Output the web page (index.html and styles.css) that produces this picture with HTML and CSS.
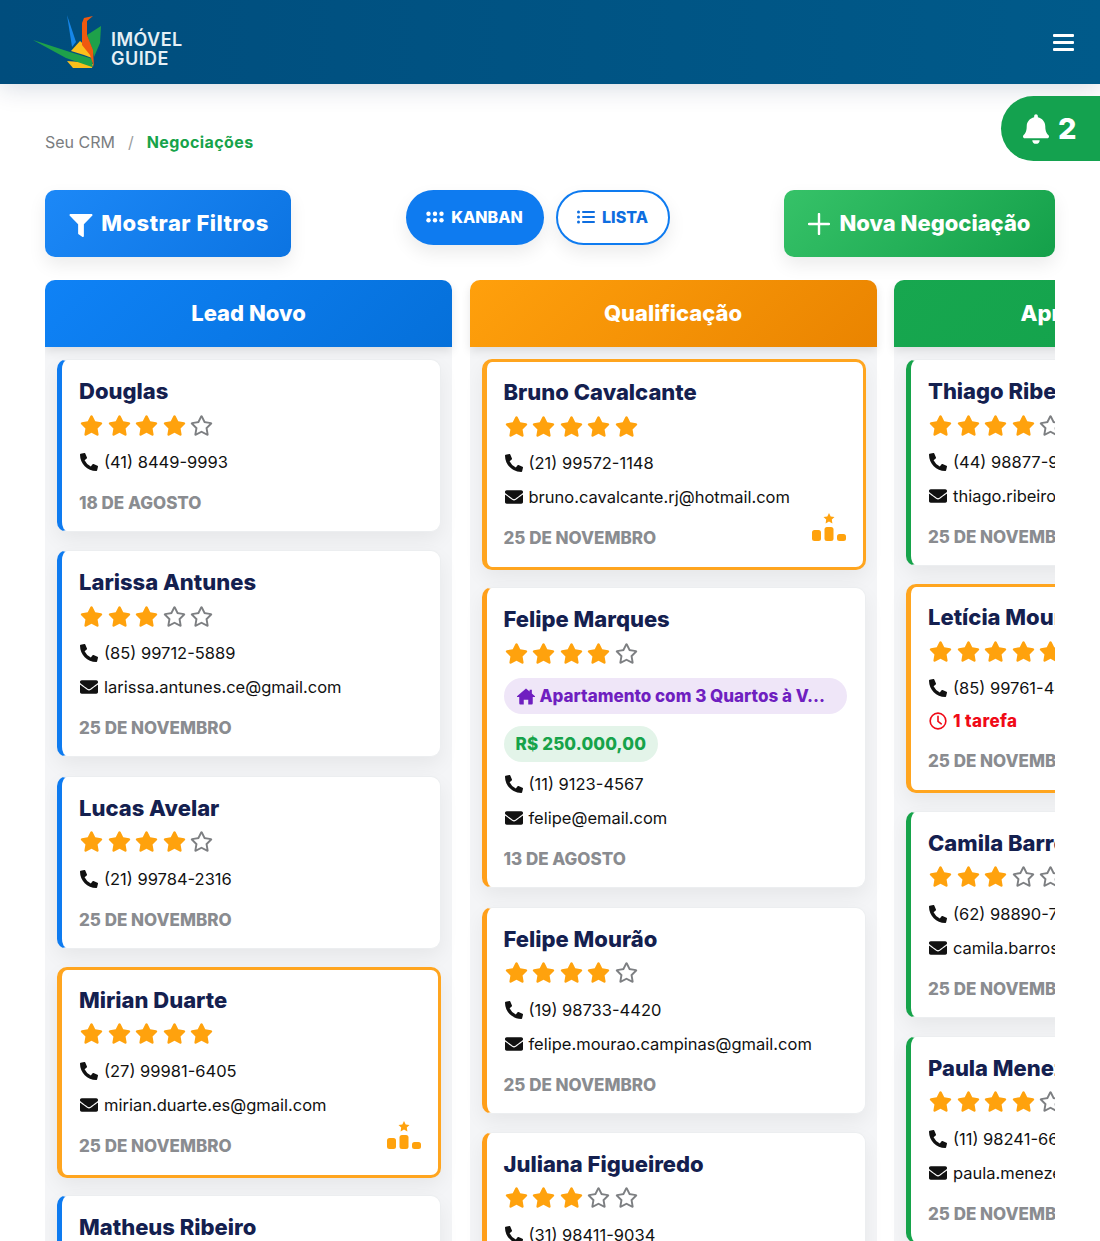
FILE: index.html
```html
<!DOCTYPE html>
<html lang="pt-BR">
<head>
    <meta charset="utf-8">
    <title>Imóvel Guide - Negociações</title>
    <link rel="stylesheet" href="styles.css">
</head>
<body>

<!-- Icons -->
<svg class="icon-defs" aria-hidden="true">
    <symbol id="i-star" viewBox="0 0 576 512"><path d="M259.3 17.8L194 150.2 47.9 171.5c-26.2 3.8-36.7 36.1-17.7 54.6l105.7 103-25 145.5c-4.5 26.3 23.2 46 46.4 33.7L288 439.6l130.7 68.7c23.2 12.2 50.9-7.4 46.4-33.7l-25-145.5 105.7-103c19-18.5 8.5-50.8-17.7-54.6L382 150.2 316.7 17.8c-11.7-23.6-45.6-23.9-57.4 0z"/></symbol>
    <symbol id="i-star-o" viewBox="0 0 576 512"><path d="M528.1 171.5L382 150.2 316.7 17.8c-11.7-23.6-45.6-23.9-57.4 0L194 150.2 47.9 171.5c-26.2 3.8-36.7 36.1-17.7 54.6l105.7 103-25 145.5c-4.5 26.3 23.2 46 46.4 33.7L288 439.6l130.7 68.7c23.2 12.2 50.9-7.4 46.4-33.7l-25-145.5 105.7-103c19-18.5 8.5-50.8-17.7-54.6zM388.6 312.3l23.7 138.4L288 385.4l-124.3 65.3 23.7-138.4-100.6-98 139-20.2 62.2-126 62.2 126 139 20.2-100.6 98z"/></symbol>
    <symbol id="i-phone" viewBox="0 0 512 512"><path d="M497.39 361.8l-112-48a24 24 0 0 0-28 6.9l-49.6 60.6A370.66 370.66 0 0 1 130.6 204.11l60.6-49.6a23.94 23.94 0 0 0 6.9-28l-48-112A24.16 24.16 0 0 0 122.6.61l-104 24A24 24 0 0 0 0 48c0 256.5 207.9 464 464 464a24 24 0 0 0 23.4-18.6l24-104a24.29 24.29 0 0 0-14.01-27.6z"/></symbol>
    <symbol id="i-mail" viewBox="0 0 512 512"><path d="M502.3 190.8c3.9-3.1 9.7-.2 9.7 4.7V400c0 26.5-21.5 48-48 48H48c-26.5 0-48-21.5-48-48V195.6c0-5 5.7-7.8 9.7-4.7 22.4 17.4 52.1 39.5 154.1 113.6 21.1 15.4 56.7 47.8 92.2 47.6 35.7.3 72-32.8 92.3-47.6 102-74.1 131.6-96.3 154-113.7zM256 320c23.2.4 56.6-29.2 73.4-41.4 132.7-96.3 142.8-104.7 173.4-128.7 5.8-4.5 9.2-11.5 9.2-18.9v-19c0-26.5-21.5-48-48-48H48C21.5 64 0 85.5 0 112v19c0 7.4 3.4 14.3 9.2 18.9 30.6 23.9 40.7 32.4 173.4 128.7 16.8 12.2 50.2 41.8 73.4 41.4z"/></symbol>
    <symbol id="i-filter" viewBox="0 0 512 512"><path d="M487.976 0H24.028C2.71 0-8.047 25.866 7.058 40.971L192 225.941V432c0 7.831 3.821 15.17 10.237 19.662l80 55.98C298.02 518.69 320 507.493 320 487.98V225.941l184.947-184.97C520.021 25.896 509.338 0 487.976 0z"/></symbol>
    <symbol id="i-bell" viewBox="0 0 448 512"><path d="M224 512c35.32 0 63.97-28.65 63.97-64H160.03c0 35.35 28.65 64 63.97 64zm215.39-149.71c-19.32-20.76-55.47-51.99-55.47-154.29 0-77.7-54.48-139.9-127.94-155.16V32c0-17.67-14.32-32-31.98-32s-31.98 14.33-31.98 32v20.84C118.56 68.1 64.08 130.3 64.08 208c0 102.3-36.15 133.53-55.47 154.29-6 6.45-8.66 14.16-8.61 21.71.11 16.4 12.98 32 32.1 32h383.8c19.12 0 32-15.6 32.1-32 .05-7.55-2.61-15.27-8.61-21.71z"/></symbol>
    <symbol id="i-home" viewBox="0 0 20 18"><path d="M10 0L0 8.6c-.4.4-.1 1 .4 1H2.5v6.9c0 .8.6 1.5 1.4 1.5H7.500v-5.500h5V18h3.600c.8 0 1.400-.7 1.400-1.500V9.600h2.100c.5 0 .8-.6.400-1L16.500 5.600V1.500h-2.500v2z"/></symbol>
    <symbol id="i-clock" viewBox="0 0 20 20"><circle cx="10" cy="10" r="8.700" fill="none" stroke="currentColor" stroke-width="1.800"/><path d="M10 4.800V10.500l3.600 2.600" fill="none" stroke="currentColor" stroke-width="1.800" stroke-linecap="round"/></symbol>
    <symbol id="i-podium" viewBox="0 0 34 30"><path d="M17 0l1.700 3.400 3.800.5-2.700 2.700.6 3.800L17 8.600l-3.400 1.800.6-3.800-2.700-2.700 3.800-.5z"/><rect x="0" y="17" width="9" height="11" rx="2.500"/><rect x="12.500" y="14" width="9" height="14" rx="2.500"/><rect x="25" y="21" width="9" height="7" rx="2.500"/></symbol>
</svg>

<header class="top-bar">
    <a class="logo" href="#">
        <svg class="logo-mark" viewBox="0 0 88 75" aria-hidden="true">
            <polygon points="47,10 56,37 52,42" fill="#1686e8"/>
            <polygon points="81,21 67,30 72,43 74,52 80,38" fill="#1ea14a"/>
            <polygon points="60,36 51,46 64,50 72,53 69,44" fill="#fbbf1c"/>
            <polygon points="47,56 53,63 72,63 73,59 60,57" fill="#fbbf1c"/>
            <polygon points="13,35 50,47 73,54 72,62 46,53" fill="#1ea14a"/>
            <polygon points="73,11 64,13 62,18 62,40 70,50 74,62 73,45 67,30 67,16" fill="#f0590f"/>
        </svg>
        <span class="logo-text">IMÓVEL<br>GUIDE</span>
    </a>
    <button class="menu-btn" aria-label="Menu"><span></span><span></span><span></span></button>
</header>

<!-- Notifications -->
<div class="notify">
    <svg class="notify-icon"><use href="#i-bell"/></svg>
    <span>2</span>
</div>

<main class="content">
    <nav class="breadcrumb">
        <span>Seu CRM</span>
        <span class="sep">/</span>
        <strong>Negociações</strong>
    </nav>

    <div class="toolbar">
        <button class="btn btn-blue">
            <svg class="btn-icon"><use href="#i-filter"/></svg>
            Mostrar Filtros
        </button>
        <div class="view-switch">
            <button class="pill pill-on">
                <svg class="pill-icon" viewBox="0 0 18 12" aria-hidden="true">
                    <g fill="currentColor">
                        <circle cx="2.500" cy="2.800" r="2.200"/><circle cx="9" cy="2.800" r="2.200"/><circle cx="15.500" cy="2.800" r="2.200"/>
                        <circle cx="2.500" cy="9.200" r="2.200"/><circle cx="9" cy="9.200" r="2.200"/><circle cx="15.500" cy="9.200" r="2.200"/>
                    </g>
                </svg>
                KANBAN
            </button>
            <button class="pill pill-off">
                <svg class="pill-icon" viewBox="0 0 18 14" aria-hidden="true">
                    <g fill="currentColor">
                        <circle cx="1.500" cy="2" r="1.500"/><circle cx="1.500" cy="7" r="1.500"/><circle cx="1.500" cy="12" r="1.500"/>
                        <rect x="5" y="1" width="13" height="2" rx="1"/><rect x="5" y="6" width="13" height="2" rx="1"/><rect x="5" y="11" width="13" height="2" rx="1"/>
                    </g>
                </svg>
                LISTA
            </button>
        </div>
        <button class="btn btn-green">
            <svg class="plus-icon" viewBox="0 0 22 22" aria-hidden="true"><path d="M11 1v20M1 11h20" stroke="currentColor" stroke-width="2.400" stroke-linecap="round"/></svg>
            Nova Negociação
        </button>
    </div>

    <div class="board">

        <!-- Lead Novo -->
        <section class="column col-blue">
            <h2 class="col-title">Lead Novo</h2>
            <div class="col-cards">
                <article class="card">
                    <h3>Douglas</h3>
                    <div class="stars"><svg class="star"><use href="#i-star"/></svg><svg class="star"><use href="#i-star"/></svg><svg class="star"><use href="#i-star"/></svg><svg class="star"><use href="#i-star"/></svg><svg class="star off"><use href="#i-star-o"/></svg></div>
                    <div class="info"><svg><use href="#i-phone"/></svg>(41) 8449-9993</div>
                    <div class="date">18 de agosto</div>
                </article>
                <article class="card">
                    <h3>Larissa Antunes</h3>
                    <div class="stars"><svg class="star"><use href="#i-star"/></svg><svg class="star"><use href="#i-star"/></svg><svg class="star"><use href="#i-star"/></svg><svg class="star off"><use href="#i-star-o"/></svg><svg class="star off"><use href="#i-star-o"/></svg></div>
                    <div class="info"><svg><use href="#i-phone"/></svg>(85) 99712-5889</div>
                    <div class="info"><svg><use href="#i-mail"/></svg>larissa.antunes.ce@gmail.com</div>
                    <div class="date">25 de novembro</div>
                </article>
                <article class="card">
                    <h3>Lucas Avelar</h3>
                    <div class="stars"><svg class="star"><use href="#i-star"/></svg><svg class="star"><use href="#i-star"/></svg><svg class="star"><use href="#i-star"/></svg><svg class="star"><use href="#i-star"/></svg><svg class="star off"><use href="#i-star-o"/></svg></div>
                    <div class="info"><svg><use href="#i-phone"/></svg>(21) 99784-2316</div>
                    <div class="date">25 de novembro</div>
                </article>
                <article class="card card-hot">
                    <h3>Mirian Duarte</h3>
                    <div class="stars"><svg class="star"><use href="#i-star"/></svg><svg class="star"><use href="#i-star"/></svg><svg class="star"><use href="#i-star"/></svg><svg class="star"><use href="#i-star"/></svg><svg class="star"><use href="#i-star"/></svg></div>
                    <div class="info"><svg><use href="#i-phone"/></svg>(27) 99981-6405</div>
                    <div class="info"><svg><use href="#i-mail"/></svg>mirian.duarte.es@gmail.com</div>
                    <div class="date">25 de novembro</div>
                    <svg class="podium"><use href="#i-podium"/></svg>
                </article>
                <article class="card">
                    <h3>Matheus Ribeiro</h3>
                    <div class="stars"><svg class="star"><use href="#i-star"/></svg><svg class="star"><use href="#i-star"/></svg><svg class="star"><use href="#i-star"/></svg><svg class="star"><use href="#i-star"/></svg><svg class="star off"><use href="#i-star-o"/></svg></div>
                </article>
            </div>
        </section>

        <!-- Qualificação -->
        <section class="column col-orange">
            <h2 class="col-title">Qualificação</h2>
            <div class="col-cards">
                <article class="card card-hot">
                    <h3>Bruno Cavalcante</h3>
                    <div class="stars"><svg class="star"><use href="#i-star"/></svg><svg class="star"><use href="#i-star"/></svg><svg class="star"><use href="#i-star"/></svg><svg class="star"><use href="#i-star"/></svg><svg class="star"><use href="#i-star"/></svg></div>
                    <div class="info"><svg><use href="#i-phone"/></svg>(21) 99572-1148</div>
                    <div class="info"><svg><use href="#i-mail"/></svg>bruno.cavalcante.rj@hotmail.com</div>
                    <div class="date">25 de novembro</div>
                    <svg class="podium"><use href="#i-podium"/></svg>
                </article>
                <article class="card">
                    <h3>Felipe Marques</h3>
                    <div class="stars"><svg class="star"><use href="#i-star"/></svg><svg class="star"><use href="#i-star"/></svg><svg class="star"><use href="#i-star"/></svg><svg class="star"><use href="#i-star"/></svg><svg class="star off"><use href="#i-star-o"/></svg></div>
                    <div class="tag-property"><svg><use href="#i-home"/></svg>Apartamento com 3 Quartos à V...</div>
                    <div class="tag-price">R$ 250.000,00</div>
                    <div class="info"><svg><use href="#i-phone"/></svg>(11) 9123-4567</div>
                    <div class="info"><svg><use href="#i-mail"/></svg>felipe@email.com</div>
                    <div class="date">13 de agosto</div>
                </article>
                <article class="card">
                    <h3>Felipe Mourão</h3>
                    <div class="stars"><svg class="star"><use href="#i-star"/></svg><svg class="star"><use href="#i-star"/></svg><svg class="star"><use href="#i-star"/></svg><svg class="star"><use href="#i-star"/></svg><svg class="star off"><use href="#i-star-o"/></svg></div>
                    <div class="info"><svg><use href="#i-phone"/></svg>(19) 98733-4420</div>
                    <div class="info"><svg><use href="#i-mail"/></svg>felipe.mourao.campinas@gmail.com</div>
                    <div class="date">25 de novembro</div>
                </article>
                <article class="card">
                    <h3>Juliana Figueiredo</h3>
                    <div class="stars"><svg class="star"><use href="#i-star"/></svg><svg class="star"><use href="#i-star"/></svg><svg class="star"><use href="#i-star"/></svg><svg class="star off"><use href="#i-star-o"/></svg><svg class="star off"><use href="#i-star-o"/></svg></div>
                    <div class="info"><svg><use href="#i-phone"/></svg>(31) 98411-9034</div>
                </article>
            </div>
        </section>

        <!-- Apresentação (cut by the board edge) -->
        <section class="column col-green">
            <h2 class="col-title">Apresentação</h2>
            <div class="col-cards">
                <article class="card card-green">
                    <h3>Thiago Ribeiro</h3>
                    <div class="stars"><svg class="star"><use href="#i-star"/></svg><svg class="star"><use href="#i-star"/></svg><svg class="star"><use href="#i-star"/></svg><svg class="star"><use href="#i-star"/></svg><svg class="star off"><use href="#i-star-o"/></svg></div>
                    <div class="info"><svg><use href="#i-phone"/></svg>(44) 98877-9021</div>
                    <div class="info"><svg><use href="#i-mail"/></svg>thiago.ribeiro.pr@gmail.com</div>
                    <div class="date">25 de novembro</div>
                </article>
                <article class="card card-hot">
                    <h3>Letícia Moura</h3>
                    <div class="stars"><svg class="star"><use href="#i-star"/></svg><svg class="star"><use href="#i-star"/></svg><svg class="star"><use href="#i-star"/></svg><svg class="star"><use href="#i-star"/></svg><svg class="star"><use href="#i-star"/></svg></div>
                    <div class="info"><svg><use href="#i-phone"/></svg>(85) 99761-4410</div>
                    <div class="info task"><svg><use href="#i-clock"/></svg>1 tarefa</div>
                    <div class="date">25 de novembro</div>
                </article>
                <article class="card card-green">
                    <h3>Camila Barros</h3>
                    <div class="stars"><svg class="star"><use href="#i-star"/></svg><svg class="star"><use href="#i-star"/></svg><svg class="star"><use href="#i-star"/></svg><svg class="star off"><use href="#i-star-o"/></svg><svg class="star off"><use href="#i-star-o"/></svg></div>
                    <div class="info"><svg><use href="#i-phone"/></svg>(62) 98890-7312</div>
                    <div class="info"><svg><use href="#i-mail"/></svg>camila.barros.go@gmail.com</div>
                    <div class="date">25 de novembro</div>
                </article>
                <article class="card card-green">
                    <h3>Paula Menezes</h3>
                    <div class="stars"><svg class="star"><use href="#i-star"/></svg><svg class="star"><use href="#i-star"/></svg><svg class="star"><use href="#i-star"/></svg><svg class="star"><use href="#i-star"/></svg><svg class="star off"><use href="#i-star-o"/></svg></div>
                    <div class="info"><svg><use href="#i-phone"/></svg>(11) 98241-6610</div>
                    <div class="info"><svg><use href="#i-mail"/></svg>paula.menezes.sp@gmail.com</div>
                    <div class="date">25 de novembro</div>
                </article>
            </div>
        </section>

    </div>
</main>

</body>
</html>
```

FILE: styles.css
```css
/* Reset and General Styles */
* {
    margin: 0;
    padding: 0;
    box-sizing: border-box;
}

html, body {
    height: 100%;
    overflow: hidden;
}

body {
    position: relative;
    background: #fff;
    color: #111;
    font-family: "Inter", "Roboto", sans-serif;
}

button {
    border: none;
    font-family: inherit;
    cursor: pointer;
}

.icon-defs {
    position: absolute;
    width: 0;
    height: 0;
}

/* Header */
.top-bar {
    display: flex;
    align-items: center;
    justify-content: space-between;
    height: 84px;
    padding: 0 26px 0 20px;
    background: linear-gradient(90deg, #004d7d, #005a8a);
    box-shadow: 0 4px 24px rgba(0, 40, 80, 0.16);
}

.logo {
    display: flex;
    align-items: center;
    gap: 3px;
    text-decoration: none;
}

.logo-mark {
    width: 88px;
    height: 75px;
}

.logo-text {
    padding-top: 13px;
    color: #e6f0f6;
    font-size: 18px;
    font-weight: 600;
    line-height: 19px;
    letter-spacing: 0.45px;
}

.menu-btn {
    display: flex;
    flex-direction: column;
    gap: 4px;
    width: 21px;
    background: none;
}

.menu-btn span {
    height: 3px;
    background: #fff;
    border-radius: 1px;
}

/* Notification tab */
.notify {
    position: absolute;
    top: 96px;
    right: 0;
    display: flex;
    align-items: center;
    gap: 9px;
    width: 99px;
    height: 65px;
    padding-left: 22px;
    background: #14a24f;
    border-radius: 33px 0 0 33px;
    color: #fff;
    font-size: 29px;
    font-weight: 800;
}

.notify-icon {
    width: 26px;
    height: 30px;
    fill: #fff;
}

/* Page */
.content {
    padding: 0 45px;
}

.breadcrumb {
    display: flex;
    gap: 13px;
    align-items: center;
    height: 24px;
    margin-top: 46px;
    color: #7a7d80;
    font-size: 16px;
}

.breadcrumb .sep {
    color: #9a9da0;
}

.breadcrumb strong {
    color: #16a34a;
    font-weight: 700;
    letter-spacing: 0.4px;
}

.toolbar {
    display: flex;
    align-items: flex-start;
    justify-content: space-between;
    margin-top: 36px;
}

.btn {
    display: flex;
    align-items: center;
    justify-content: center;
    height: 67px;
    padding-bottom: 2px;
    border-radius: 10px;
    color: #fff;
    font-size: 22px;
    font-weight: 800;
    white-space: nowrap;
    box-shadow: 0 8px 18px rgba(0, 0, 0, 0.08);
}

.btn-blue {
    gap: 8px;
    width: 246px;
    padding-left: 2px;
    background: linear-gradient(135deg, #1c88f7, #0c74e2);
    letter-spacing: 0.5px;
}

.btn-green {
    gap: 9px;
    width: 271px;
    background: linear-gradient(135deg, #36c268, #14a04a);
}

.btn-icon {
    width: 24px;
    height: 23px;
    margin-top: 5px;
    fill: #fff;
}

.plus-icon {
    width: 22px;
    height: 22px;
    margin-top: 2px;
}

.view-switch {
    display: flex;
    gap: 12px;
}

.pill {
    display: flex;
    align-items: center;
    justify-content: center;
    gap: 7px;
    height: 55px;
    padding-bottom: 2px;
    border-radius: 28px;
    font-size: 16px;
    font-weight: 800;
    box-shadow: 0 8px 18px rgba(0, 0, 0, 0.08);
}

.pill-on {
    width: 138px;
    background: #0e7bf0;
    color: #fff;
}

.pill-off {
    width: 114px;
    background: #fff;
    border: 2px solid #0e7bf0;
    color: #0e6ee0;
}

.pill-icon {
    width: 18px;
    height: 14px;
}

/* Board */
.board {
    display: flex;
    gap: 17.5px;
    margin-top: 23px;
    overflow: hidden;
}

.column {
    flex: 0 0 407px;
    height: 1000px;
    background: #f4f5f7;
    border-radius: 10px 10px 0 0;
}

.col-title {
    height: 67px;
    border-radius: 10px 10px 0 0;
    color: #fff;
    font-size: 22px;
    font-weight: 800;
    line-height: 67px;
    text-align: center;
    white-space: nowrap;
    box-shadow: 0 4px 10px rgba(0, 0, 0, 0.1);
}

.col-blue .col-title {
    background: linear-gradient(135deg, #0f82f6, #0570da);
}

.col-orange .col-title {
    background: linear-gradient(135deg, #ffa00c, #ea8400);
}

.col-green .col-title {
    background: linear-gradient(135deg, #17a74f, #12a04a);
}

.col-cards {
    display: flex;
    flex-direction: column;
    gap: 18.25px;
    padding: 12px 11px 12px 12px;
}

/* Cards */
.card {
    position: relative;
    padding: 18px 18px 17px 17px;
    background: #fff;
    border: 1px solid #eceef0;
    border-left: 5px solid #0e7bf0;
    border-radius: 10px;
    box-shadow: 0 8px 20px rgba(0, 0, 0, 0.06);
    white-space: nowrap;
}

.col-orange .card {
    border-left-color: #ff9f1a;
}

.card-green {
    border-left-color: #16a34a;
}

.card.card-hot {
    margin-bottom: -1px;
    padding-top: 17px;
    padding-bottom: 18px;
    border: 3px solid #ffa51f;
    border-left-width: 5px;
}

.card h3 {
    color: #14204f;
    font-size: 22px;
    font-weight: 800;
    line-height: 26px;
}

.stars {
    display: flex;
    gap: 4.500px;
    align-items: center;
    height: 24px;
    margin: 9px 0 0 1px;
}

.star {
    width: 23px;
    height: 21px;
    fill: #ffa20d;
}

.star.off {
    fill: #7d7f82;
}

.info {
    display: flex;
    align-items: center;
    gap: 6px;
    height: 24px;
    margin-top: 10px;
    font-size: 16.500px;
}

.stars + .info {
    margin-top: 13px;
}

.info svg {
    flex: none;
    width: 18px;
    height: 18px;
    margin-left: 1px;
    fill: #111;
}

.info.task {
    height: 22px;
    color: #f00a17;
    font-size: 17px;
    font-weight: 800;
    letter-spacing: 0.4px;
}

.info.task svg {
    color: #f00a17;
    fill: none;
}

.date {
    margin-top: 18px;
    color: #8a8c90;
    font-size: 17px;
    font-weight: 800;
    line-height: 22px;
    text-transform: uppercase;
}

.podium {
    position: absolute;
    right: 17px;
    bottom: 24px;
    width: 34px;
    height: 30px;
    fill: #ffa20d;
}

.tag-property {
    display: flex;
    align-items: center;
    gap: 5px;
    height: 36px;
    margin-top: 13px;
    padding-left: 13px;
    background: #efe6f8;
    border-radius: 18px;
    color: #6f1fc0;
    font-size: 17px;
    font-weight: 800;
}

.tag-property svg {
    width: 18px;
    height: 17px;
    fill: #6f1fc0;
}

.tag-price {
    width: max-content;
    height: 36px;
    margin-top: 12px;
    padding: 0 12px;
    background: #e3f4e9;
    border-radius: 18px;
    color: #16a34a;
    font-size: 17px;
    font-weight: 800;
    line-height: 36px;
    letter-spacing: 0.15px;
}

.tag-price + .info {
    margin-top: 10px;
}
```
